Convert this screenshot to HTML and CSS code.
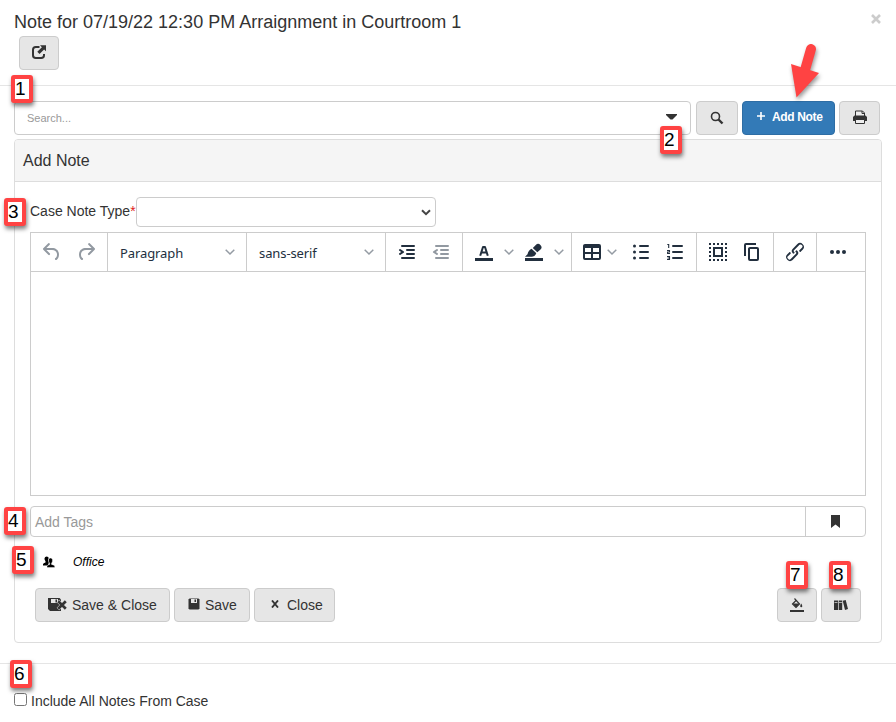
FILE: index.html
```html
<!DOCTYPE html>
<html lang="en">
<head>
<meta charset="utf-8">
<title>Add Note</title>
<link rel="stylesheet" href="styles.css">
</head>
<body>
<header class="head">
  <div class="head-row"><h1>Note for 07/19/22 12:30 PM Arraignment in Courtroom 1</h1><span class="dismiss"><svg width="10" height="10" viewBox="0 0 10 10"><path d="M1 1l8 8M9 1L1 9" stroke="#ccc" stroke-width="2.6"/></svg></span></div>
  <button class="btn popout"><svg width="16" height="16" viewBox="0 0 16 16"><path d="M8.500 3H4.800Q2 3 2 5.800v5.400Q2 14 4.800 14h5.400Q13 14 13 11.200V10" fill="none" stroke="#333" stroke-width="2"/><path d="M9 1.300h6v6l-1.900-1.900-4.600 4.600-2.200-2.200 4.600-4.600z" fill="#333"/></svg></button>
</header>

<div class="searchbar">
  <div class="search"><span>Search...</span><svg width="11" height="6" viewBox="0 0 11 6"><path d="M0 0h11v1L6.500 5.500h-2L0 1z" fill="#333"/></svg></div>
  <button class="btn b-find"><svg width="14" height="14" viewBox="0 0 14 14"><circle cx="5.500" cy="5.500" r="4" fill="none" stroke="#333" stroke-width="1.600"/><path d="M8.500 8.500l4 4" stroke="#333" stroke-width="2.400"/></svg></button>
  <button class="btn b-add"><svg width="8" height="8" viewBox="0 0 8 8"><path d="M4 0v8M0 4h8" stroke="#fff" stroke-width="1.600"/></svg><span>Add Note</span></button>
  <button class="btn b-print"><svg width="16" height="14" viewBox="0 0 16 14"><path d="M3.500 6V1h7l2 2v3" fill="#eee" stroke="#333"/><path d="M10 1v2.500h2.500" fill="none" stroke="#333"/><path d="M2.500 5.500h11L15 7v4H1V7z" fill="#333"/><path d="M3.500 9.500h9v4h-9z" fill="#eee" stroke="#333"/></svg></button>
</div>

<section class="panel">
  <h2>Add Note</h2>
  <div class="panel-body">
    <div class="type"><label>Case Note Type<b>*</b></label><div class="select"><svg width="10" height="7" viewBox="0 0 10 7"><path d="M1 1.200l4 4 4-4" fill="none" stroke="#444" stroke-width="2"/></svg></div></div>

    <div class="editor">
      <div class="toolbar">
        <div class="group g1 muted">
          <svg class="ic" viewBox="0 0 24 24"><path d="M6.400 8H12c3.700 0 6.200 2 6.800 5.100.6 2.700-.4 5.600-2.300 6.800a1 1 0 0 1-1-1.800c1.100-.6 1.800-2.700 1.400-4.600-.5-2.100-2.100-3.500-4.900-3.500H6.400l3.300 3.300a1 1 0 1 1-1.400 1.400l-5-5a1 1 0 0 1 0-1.400l5-5a1 1 0 0 1 1.400 1.400L6.400 8z"/></svg>
          <svg class="ic" viewBox="0 0 24 24"><path transform="matrix(-1 0 0 1 24 0)" d="M6.400 8H12c3.700 0 6.200 2 6.800 5.100.6 2.700-.4 5.600-2.300 6.800a1 1 0 0 1-1-1.800c1.100-.6 1.800-2.700 1.400-4.600-.5-2.100-2.100-3.500-4.900-3.500H6.400l3.300 3.300a1 1 0 1 1-1.400 1.400l-5-5a1 1 0 0 1 0-1.400l5-5a1 1 0 0 1 1.400 1.400L6.400 8z"/></svg>
        </div>
        <div class="group pick"><span>Paragraph</span><svg class="chev" viewBox="0 0 10 10"><path d="M.7 2.700L5 7l4.300-4.300"/></svg></div>
        <div class="group pick"><span>sans-serif</span><svg class="chev" viewBox="0 0 10 10"><path d="M.7 2.700L5 7l4.300-4.300"/></svg></div>
        <div class="group g4">
          <svg class="ic" viewBox="0 0 24 24"><path d="M7 5h12a1 1 0 0 1 0 2H7a1 1 0 0 1 0-2zm5 4h7a1 1 0 0 1 0 2h-7a1 1 0 0 1 0-2zm0 4h7a1 1 0 0 1 0 2h-7a1 1 0 0 1 0-2zm-5 4h12a1 1 0 0 1 0 2H7a1 1 0 0 1 0-2zm-2.600-3.800L6.200 12l-1.800-1.200a1 1 0 0 1 1.200-1.600l3 2a1 1 0 0 1 0 1.600l-3 2a1 1 0 1 1-1.200-1.600z"/></svg>
          <svg class="ic muted" viewBox="0 0 24 24"><path d="M7 5h12a1 1 0 0 1 0 2H7a1 1 0 0 1 0-2zm5 4h7a1 1 0 0 1 0 2h-7a1 1 0 0 1 0-2zm0 4h7a1 1 0 0 1 0 2h-7a1 1 0 0 1 0-2zm-5 4h12a1 1 0 0 1 0 2H7a1 1 0 0 1 0-2zm1.600-3.800a1 1 0 0 1-1.200 1.600l-3-2a1 1 0 0 1 0-1.600l3-2a1 1 0 0 1 1.200 1.600L6.800 12l1.800 1.200z"/></svg>
        </div>
        <div class="group g5">
          <svg class="ic" viewBox="0 0 24 24"><path d="M3 18h18v3H3z"/><path fill="none" stroke="#222f3e" stroke-width="2" stroke-linejoin="round" d="M8.200 15.800L11 7h2l2.800 8.800M9.500 12.500h5"/></svg>
          <svg class="chev" viewBox="0 0 10 10"><path d="M.7 2.700L5 7l4.300-4.300"/></svg>
          <svg class="ic" viewBox="0 0 24 24"><path d="M3 18h18v3H3zM3 16.800l2.500-2.600q1-4.200 4.300-5.400l4.600 4.300q-1.200 3.200-4.400 3.700zM10.800 8l3-3a3.200 3.200 0 0 1 4.700 4.500l-3.200 2.800z"/><path d="M9.500 8.200l5.800 5.300" stroke="#fff" stroke-width=".7"/></svg>
          <svg class="chev" viewBox="0 0 10 10"><path d="M.7 2.700L5 7l4.300-4.300"/></svg>
        </div>
        <div class="group g6">
          <svg class="ic" viewBox="0 0 24 24"><path fill-rule="evenodd" d="M19 4a2 2 0 0 1 2 2v12a2 2 0 0 1-2 2H5a2 2 0 0 1-2-2V6c0-1.100.9-2 2-2h14zM5 14v4h6v-4H5zm14 0h-6v4h6v-4zm0-6h-6v4h6V8zM5 12h6V8H5v4z"/></svg>
          <svg class="chev" viewBox="0 0 10 10"><path d="M.7 2.700L5 7l4.300-4.300"/></svg>
          <svg class="ic bullets" viewBox="0 0 24 24"><path d="M11 5h8a1 1 0 0 1 0 2h-8a1 1 0 0 1 0-2zm0 6h8a1 1 0 0 1 0 2h-8a1 1 0 0 1 0-2zm0 6h8a1 1 0 0 1 0 2h-8a1 1 0 0 1 0-2z"/><circle cx="5.500" cy="6" r="1.500"/><circle cx="5.500" cy="12" r="1.500"/><circle cx="5.500" cy="18" r="1.500"/></svg>
          <svg class="ic numbers" viewBox="0 0 24 24"><path d="M10 5h9a1 1 0 0 1 0 2h-9a1 1 0 0 1 0-2zm0 6h9a1 1 0 0 1 0 2h-9a1 1 0 0 1 0-2zm0 6h9a1 1 0 0 1 0 2h-9a1 1 0 0 1 0-2z"/><path fill="none" stroke="#222f3e" stroke-width="1.100" d="M4.300 4.500h1.400V8M4 10.500h2.500V12H4.600v1.500H7M4 16.500h2.500v3H4M4.500 18h2"/></svg>
        </div>
        <div class="group g7">
          <svg class="ic" viewBox="0 0 24 24"><path fill="none" stroke="#222f3e" stroke-width="2" stroke-dasharray="2 2" d="M3 4h18M3 20h18M4 7v11M20 7v11"/><path fill="none" stroke="#222f3e" stroke-width="2" d="M8 8h8v8H8z"/></svg>
          <svg class="ic" viewBox="0 0 24 24"><path fill-rule="evenodd" d="M16 3H6a2 2 0 0 0-2 2v11h2V5h10V3zm1 4a2 2 0 0 1 2 2v10a2 2 0 0 1-2 2h-7a2 2 0 0 1-2-2V9c0-1.200.9-2 2-2h7zm0 12V9h-7v10h7z"/></svg>
        </div>
        <div class="group g8">
          <svg class="ic" viewBox="0 0 24 24"><path d="M6.200 12.300a1 1 0 0 1 1.400 1.400l-2.100 2a2 2 0 1 0 2.700 2.800l4.800-4.800a1 1 0 0 0 0-1.400 1 1 0 1 1 1.400-1.300 2.900 2.900 0 0 1 0 4L9.600 20a3.900 3.900 0 0 1-5.500-5.500l2-2zm11.600-.6a1 1 0 0 1-1.400-1.400l2-2a2 2 0 1 0-2.600-2.800L11 10.300a1 1 0 0 0 0 1.400A1 1 0 1 1 9.600 13a2.900 2.900 0 0 1 0-4L14.400 4a3.900 3.900 0 0 1 5.500 5.500l-2 2z"/></svg>
        </div>
        <div class="group g9">
          <svg class="ic" viewBox="0 0 24 24"><circle cx="6" cy="12" r="2"/><circle cx="12" cy="12" r="2"/><circle cx="18" cy="12" r="2"/></svg>
        </div>
      </div>
      <div class="canvas"></div>
    </div>

    <div class="tags"><div class="tags-input">Add Tags</div><div class="tags-mark"><svg width="9" height="13" viewBox="0 0 9 13"><path d="M0 0h9v13L4.500 9.500 0 13z" fill="#333"/></svg></div></div>

    <div class="office"><svg width="12" height="12" viewBox="0 0 12 12"><path d="M0 9.500V8.200q.2-.9 2.500-1.700V5.300Q1.300 4 1.500 2.300 1.900.5 3.700.5q1.800 0 2 1.500L5 4l.8 2.500L5 9.500z"/><path stroke="#fff" stroke-width=".4" d="M4 11.500V10q.2-1 2.700-1.600V7.300Q5.400 6 5.600 3.700 5.900 2 7.500 2q1.800 0 2 1.700.2 2.300-1 3.600v1.100Q11.700 9 11.700 10v1.500z"/></svg><i>Office</i></div>

    <div class="actions">
      <button class="btn b-sc"><svg width="19" height="15" viewBox="0 0 19 15"><path d="M0 1h11.500L13 2.500V14H2l-2-2z" fill="#333"/><path d="M3 2h7v4H3z" fill="#e6e6e6"/><path d="M7.500 2.500H9v3H7.500z" fill="#333"/><path d="M10 4l8 8M18 4l-8 8" stroke="#e6e6e6" stroke-width="3.600"/><path d="M10.200 4.200l7.600 7.600M17.800 4.200l-7.600 7.600" stroke="#333" stroke-width="2.700"/></svg><span>Save &amp; Close</span></button>
      <button class="btn b-s"><svg width="12" height="12" viewBox="0 0 12 12"><path d="M1.500.5h9l1 1V10.500l-1 1h-9l-1-1v-9z" fill="#333"/><path d="M3 1h6v4H3z" fill="#e6e6e6"/><path d="M6.500 1.500H8V4H6.500z" fill="#333"/></svg><span>Save</span></button>
      <button class="btn b-c"><svg width="8" height="8" viewBox="0 0 8 8"><path d="M1 .5l6 7M7 .5l-6 7" stroke="#333" stroke-width="1.900"/></svg><span>Close</span></button>
      <button class="btn b-fill"><svg width="14" height="14" viewBox="0 0 14 14"><path d="M0 12h14v2H0z" fill="#333"/><path d="M4.500.5l5 5.500-3.500 3.500L2.500 6 6 2.500" fill="none" stroke="#333" stroke-width="1.200"/><path d="M2.500 5.500h7L6 9.500zM11.200 5.500q2.200 3.600 0 3.800-2-.2 0-3.800z" fill="#333"/></svg></button>
      <button class="btn b-books"><svg width="14" height="10" viewBox="0 0 14 10"><path d="M0 .5h4V10H0zM4.700.5h3.500V10H4.700zM8.700.8l3-.8L14 9l-3 .9z" fill="#333"/><path d="M.5 2.500h3M5 2.500h3" stroke="#e6e6e6" stroke-width=".7"/></svg></button>
    </div>
  </div>
</section>

<footer><label><input type="checkbox">Include All Notes From Case</label></footer>

<span class="pin p1">1</span><span class="pin p2">2</span><span class="pin p3">3</span><span class="pin p4">4</span>
<span class="pin p5">5</span><span class="pin p6">6</span><span class="pin p7">7</span><span class="pin p8">8</span>
<svg class="arrow" width="40" height="64" viewBox="0 0 40 64"><path d="M25 13L19 34" stroke="#ff4343" stroke-width="10" stroke-linecap="round"/><path d="M5 28l28 9-22.500 24.500z" fill="#ff4343"/></svg>
</body>
</html>
```

FILE: styles.css
```css
* { box-sizing: border-box; }
body { margin: 0; width: 896px; height: 722px; overflow: hidden; position: relative; background: #fff; color: #333; font: 14px/20px "Liberation Sans", Arial, sans-serif; }
svg { display: block; flex: none; }
h1, h2 { margin: 0; font-weight: 400; }
.btn { display: flex; align-items: center; height: 34px; margin: 0; padding: 0; border: 1px solid #ccc; border-radius: 4px; background: #e6e6e6; color: #333; font: 14px/20px "Liberation Sans", Arial, sans-serif; white-space: nowrap; }

.head { height: 86px; border-bottom: 1px solid #e5e5e5; padding: 9px 15px 0 14px; }
.head-row { display: flex; justify-content: space-between; height: 27px; }
h1 { font-size: 18px; line-height: 27px; }
.dismiss { padding-top: 5px; }
.popout { width: 40px; margin-left: 5px; padding-bottom: 2px; justify-content: center; }

.searchbar { display: flex; padding: 15px 0 0 14px; height: 53px; }
.search { width: 677px; height: 34px; border: 1px solid #ccc; border-radius: 4px; display: flex; align-items: center; justify-content: space-between; padding: 0 13px 0 12px; font-size: 11px; color: #999; }
.search svg { margin-top: -3px; }
.b-find { width: 42px; margin-left: 5px; padding-bottom: 1px; justify-content: center; }
.b-add { width: 93px; margin-left: 4px; padding: 0 0 3px 14px; gap: 7px; background: #337ab7; border-color: #2e6da4; color: #fff; font-size: 12px; font-weight: 700; letter-spacing: -.35px; }
.b-add svg { margin-top: -2px; }
.b-print { width: 41px; margin-left: 4px; padding-bottom: 2px; justify-content: center; }

.panel { margin: 0 14px; width: 868px; height: 504px; border: 1px solid #ddd; border-radius: 4px; }
.panel h2 { height: 42px; padding-left: 8px; font-size: 16px; line-height: 41px; background: #f5f5f5; border-bottom: 1px solid #ddd; border-radius: 3px 3px 0 0; }
.panel-body { padding: 15px; }
.type { display: flex; height: 30px; }
.type label { width: 106px; line-height: 28px; white-space: nowrap; }
.type b { color: #e02020; font-weight: 400; }
.select { width: 300px; height: 30px; border: 1px solid #ccc; border-radius: 4px; display: flex; align-items: center; justify-content: flex-end; padding-right: 4px; }

.editor { margin-top: 5px; height: 264px; border: 1px solid #ccc; display: flex; flex-direction: column; }
.toolbar { height: 39px; border-bottom: 1px solid #ccc; display: flex; }
.canvas { flex: 1; }
.group { display: flex; align-items: center; border-right: 1px solid #ccc; padding-left: 9px; gap: 10px; }
.group:last-child { border-right: 0; }
.ic { width: 24px; height: 24px; fill: #222f3e; }
.muted, .muted .ic { fill: #9299a1; }
.chev { width: 10px; height: 10px; fill: none; stroke: #949ba3; stroke-width: 1.5; }
.g1, .g4, .g7 { width: 77px; }
.pick { width: 139px; padding: 0 11px 0 12px; justify-content: space-between; font: 13px/20px "Noto Sans", sans-serif; letter-spacing: -.1px; color: #222f3e; }
.pick span { padding-top: 1px; }
.g5 { width: 109px; gap: 8px; }
.g6 { width: 125px; padding-left: 8px; gap: 0; }
.g6 .chev { margin-left: 3px; }
.bullets { margin-left: 12px; }
.numbers { margin-left: 10px; }
.g8 { width: 43px; }

.tags { display: flex; margin-top: 10px; height: 31px; border: 1px solid #ccc; border-radius: 4px; }
.tags-input { width: 775px; padding-left: 4px; line-height: 31px; color: #999; border-right: 1px solid #ccc; }
.tags-mark { flex: 1; display: flex; align-items: center; justify-content: center; }
.office { display: flex; align-items: center; height: 20px; margin: 15px 0 0 13px; gap: 18px; font-size: 12px; color: #000; }
.office i { padding-bottom: 1px; }
.actions { display: flex; gap: 4px; margin: 16px 0 0 5px; }
.b-sc { width: 135px; padding-left: 12px; gap: 5px; }
.b-sc svg { margin-top: -2px; }
.b-s { width: 76px; padding-left: 13px; gap: 5px; }
.b-s svg { margin-top: -3px; }
.b-c { width: 81px; padding-left: 16px; gap: 8px; }
.b-c svg { margin-top: -3px; }
.b-fill, .b-books { width: 40px; padding-bottom: 1px; justify-content: center; }
.b-fill { margin-left: auto; }
.b-books { margin-right: 5px; }

footer { margin-top: 20px; border-top: 1px solid #e5e5e5; padding: 27px 0 0 14px; }
footer label { display: flex; align-items: center; }
footer input { width: 13px; height: 13px; margin: -3px 4px 0 0; }

/* Numbered callouts lying over the form */
.pin { position: absolute; width: 22px; height: 28px; border: 4px solid #ff4343; border-radius: 3px; background: #fff; color: #000; font-size: 19px; line-height: 19px; box-shadow: 1px 3px 4px rgba(0,0,0,.5); }
.p1 { left: 11px; top: 75px; }
.p2 { left: 660px; top: 126px; }
.p3 { left: 4px; top: 198px; }
.p4 { left: 4px; top: 507px; }
.p5 { left: 12px; top: 546px; }
.p6 { left: 10px; top: 660px; }
.p7 { left: 786px; top: 561px; }
.p8 { left: 829px; top: 561px; }
.arrow { position: absolute; left: 786px; top: 36px; filter: drop-shadow(1px 3px 2px rgba(0,0,0,.4)); }
```
